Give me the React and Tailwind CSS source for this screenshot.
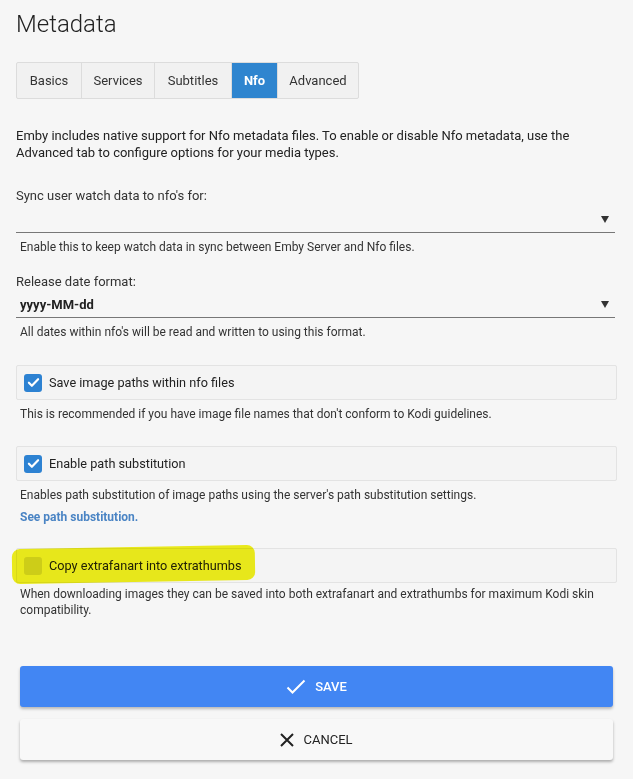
import React from "react";

function Check({ checked }) {
  return (
    <span
      className={
        "w-[18px] h-[18px] rounded-[3px] flex items-center justify-center shrink-0 " +
        (checked ? "bg-[#2d82d2]" : "bg-[#d8d8d8]")
      }
    >
      {checked && (
        <svg width="13" height="13" viewBox="0 0 24 24">
          <path d="M3.5 12.5l5.5 5.5L20.5 6" fill="none" stroke="#fff" strokeWidth="4" strokeLinecap="round" strokeLinejoin="round" />
        </svg>
      )}
    </span>
  );
}

function CheckRow({ checked, label }) {
  return (
    <div className="h-[35px] border border-[#e3e3e3] rounded-[2px] bg-[#f4f4f4] flex items-center pl-[7px] gap-[7px]">
      <Check checked={checked} />
      <span className="text-[12.7px] text-[#222]">{label}</span>
    </div>
  );
}

function Arrow() {
  return (
    <svg width="8" height="7" viewBox="0 0 8 7" className="mr-[6px]">
      <path d="M0 0h8L4 7z" fill="#333" />
    </svg>
  );
}

export default function App() {
  const tabs = ["Basics", "Services", "Subtitles", "Nfo", "Advanced"];
  const tabW = ["w-[64px]", "w-[73px]", "w-[77px]", "w-[46px]", "w-[81px]"];
  return (
    <div className="min-h-[779px] bg-[#f6f6f6] text-[#222] font-['Roboto',sans-serif] px-[16px] pt-[8px] pb-[20px]">
      <h1 className="text-[24px] font-light text-[#222] leading-[32px]">Metadata</h1>
      <div className="mt-[22px] flex w-fit border border-[#dcdcdc] rounded-[2px] bg-[#f1f1f1] h-[37px]">
        {tabs.map((t, i) => (
          <div
            key={t}
            className={
              tabW[i] +
              " flex items-center justify-center text-[13px] " +
              (i > 0 ? "border-l border-[#dcdcdc] " : "") +
              (t === "Nfo" ? "bg-[#2f85cf] text-white font-bold" : "text-[#333]")
            }
          >
            {t}
          </div>
        ))}
      </div>

      <p className="mt-[28px] text-[13px] leading-[17px] text-[#222] pr-[30px]">
        Emby includes native support for Nfo metadata files. To enable or disable Nfo metadata, use the Advanced tab to configure options for your media types.
      </p>

      <div className="mt-[26px] text-[13px] text-[#333] leading-[17px]">Sync user watch data to nfo's for:</div>
      <div className="mt-[2px] mr-[2px] h-[27px] border-b border-[#777] flex items-center justify-end">
        <Arrow />
      </div>
      <div className="mt-[6px] pl-[4px] text-[12px] text-[#333] leading-[16px]">Enable this to keep watch data in sync between Emby Server and Nfo files.</div>

      <div className="mt-[18px] text-[13px] text-[#333] leading-[17px]">Release date format:</div>
      <div className="mt-[2px] mr-[2px] h-[26px] border-b border-[#777] flex items-center justify-between">
        <span className="pl-[4px] text-[13px] font-bold text-[#222]">yyyy-MM-dd</span>
        <Arrow />
      </div>
      <div className="mt-[6px] pl-[4px] text-[12px] text-[#333] leading-[16px]">All dates within nfo's will be read and written to using this format.</div>

      <div className="mt-[25px]">
        <CheckRow checked label="Save image paths within nfo files" />
      </div>
      <div className="mt-[6px] pl-[4px] text-[12px] text-[#333] leading-[16px]">This is recommended if you have image file names that don't conform to Kodi guidelines.</div>

      <div className="mt-[24px]">
        <CheckRow checked label="Enable path substitution" />
      </div>
      <div className="mt-[6px] pl-[4px] text-[12px] text-[#333] leading-[16px]">Enables path substitution of image paths using the server's path substitution settings.</div>
      <div className="mt-[6px] pl-[4px] text-[12px] font-bold text-[#4a84c4] leading-[16px]">See path substitution.</div>

      <div className="mt-[23px] relative">
        <CheckRow checked={false} label="Copy extrafanart into extrathumbs" />
        <div className="absolute left-[-4px] top-[-1px] w-[243px] h-[35px] bg-[#f2f21c] mix-blend-multiply rounded-[8px] -rotate-[1deg]" />
      </div>
      <div className="mt-[3px] pl-[4px] text-[12px] text-[#333] leading-[16px] pr-[20px]">When downloading images they can be saved into both extrafanart and extrathumbs for maximum Kodi skin compatibility.</div>

      <div className="mt-[48px] mx-[4px] flex flex-col gap-[12px]">
        <div className="h-[41px] rounded-[3px] bg-[#4286f3] shadow-[0_2px_3px_rgba(0,0,0,0.25)] flex items-center justify-center gap-[9px] text-white">
          <svg width="20" height="16" viewBox="0 0 20 16">
            <path d="M1.5 8.5l5 5L18.5 1.5" fill="none" stroke="#fff" strokeWidth="2" />
          </svg>
          <span className="text-[13px] font-medium">SAVE</span>
        </div>
        <div className="h-[41px] rounded-[3px] bg-[#f8f8f8] shadow-[0_2px_3px_rgba(0,0,0,0.3)] flex items-center justify-center gap-[9px] text-[#222]">
          <svg width="14" height="14" viewBox="0 0 14 14">
            <path d="M1 1l12 12M13 1L1 13" fill="none" stroke="#222" strokeWidth="2" />
          </svg>
          <span className="text-[13px]">CANCEL</span>
        </div>
      </div>
    </div>
  );
}
